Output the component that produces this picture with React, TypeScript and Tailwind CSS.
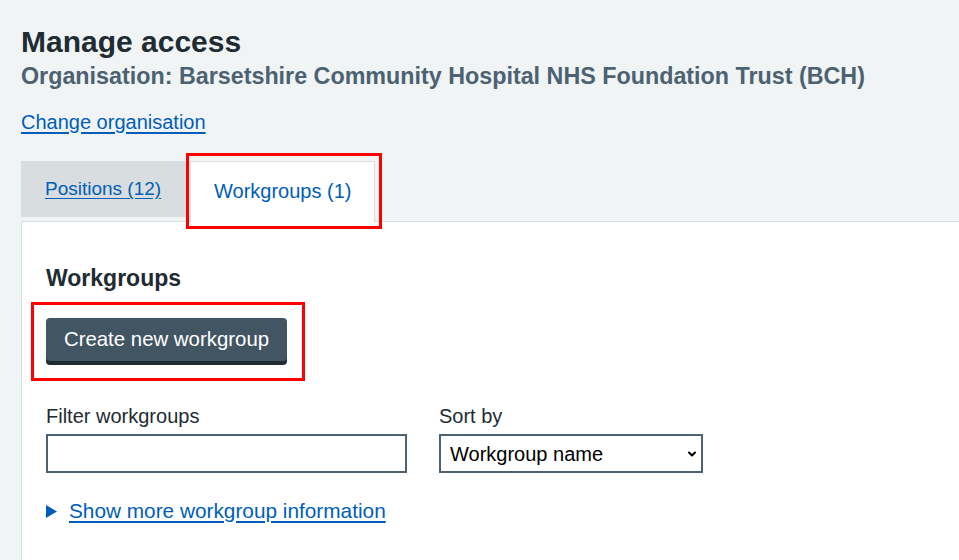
import { ChevronDown } from "lucide-react";

function Annotation({ className }: { className: string }) {
  // red highlight box drawn over the screenshot
  return <span className={`pointer-events-none absolute border-[3px] border-[#ff0000] ${className}`} />;
}

function Tabs() {
  return (
    <div className="mt-[25px] flex items-start gap-[4px]">
      <div className="h-[56px] w-[165px] bg-[#d8dde0] pl-[24px] pt-[16px]">
        <a href="#" className="text-[19px] leading-[24px] text-[#005eb8] underline underline-offset-[3px]">
          Positions (12)
        </a>
      </div>
      <div className="relative z-10 -mb-px">
        <div className="h-[61px] w-[185px] border border-b-0 border-[#d8dde0] bg-white pl-[23px] pt-[17px] text-[20px] leading-[24px] text-[#005eb8]">
          Workgroups (1)
        </div>
        <Annotation className="-top-[8px] -left-[4px] -right-[7px] -bottom-[7px]" />
      </div>
    </div>
  );
}

function Field({ label, children, className }: { label: string; children: React.ReactNode; className?: string }) {
  return (
    <div className={className}>
      <label className="block text-[20px] leading-[24px] text-[#212b32]">{label}</label>
      <div className="mt-[6px]">{children}</div>
    </div>
  );
}

export default function App() {
  return (
    <div className="min-h-screen overflow-hidden bg-[#f0f4f5] pl-[21px] pt-[24px] font-['Liberation_Sans',Arial,sans-serif] text-[#212b32]">
      <h1 className="text-[30px] font-bold leading-[36px]">Manage access</h1>
      <p className="mt-[2px] text-[23.3px] font-bold leading-[28px] text-[#4c6272]">
        Organisation: Barsetshire Community Hospital NHS Foundation Trust (BCH)
      </p>
      <a
        href="#"
        className="mt-[20px] inline-block text-[20px] leading-[24px] text-[#005eb8] underline underline-offset-[3px]"
      >
        Change organisation
      </a>

      <Tabs />

      <section className="min-h-[340px] border-l border-t border-[#d8dde0] bg-white pl-[24px] pt-[42px]">
        <h2 className="text-[23px] font-bold leading-[28px]">Workgroups</h2>

        <div className="relative mt-[26px] inline-block">
          <button
            type="button"
            className="h-[43px] w-[241px] rounded-[4px] bg-[#425563] pb-[10px] pt-[9px] text-center text-[20.4px] leading-[24px] text-white shadow-[0_4px_0_#212b32]"
          >
            Create new workgroup
          </button>
          <Annotation className="-top-[16px] -left-[15px] -right-[18px] -bottom-[20px]" />
        </div>

        <div className="mt-[43px] flex gap-[32px]">
          <Field label="Filter workgroups">
            <input
              type="text"
              className="block h-[39px] w-[361px] border-2 border-[#4c6272] bg-white px-2 text-[20px] outline-none"
            />
          </Field>
          <Field label="Sort by">
            <div className="relative w-[264px]">
              <select className="block h-[39px] w-full appearance-none border-2 border-[#4c6272] bg-white pl-[9px] text-[20px] leading-[24px] text-black outline-none">
                <option>Workgroup name</option>
              </select>
              <ChevronDown
                className="pointer-events-none absolute right-[5px] top-[14px] h-[12px] w-[12px] text-black"
                strokeWidth={4}
              />
            </div>
          </Field>
        </div>

        <div className="mt-[26px] flex items-center gap-[12px]">
          <svg width="11" height="13" viewBox="0 0 11 13" className="shrink-0">
            <polygon points="0,0 11,6.5 0,13" fill="#005eb8" />
          </svg>
          <a href="#" className="text-[20.8px] leading-[24px] text-[#005eb8] underline underline-offset-[3px]">
            Show more workgroup information
          </a>
        </div>
      </section>
    </div>
  );
}
